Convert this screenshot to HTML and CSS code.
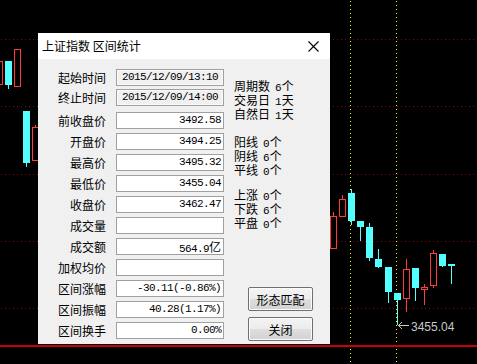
FILE: index.html
```html
<!DOCTYPE html>
<html lang="zh-CN">
<head>
    <meta charset="UTF-8">
    <title>区间统计</title>
    <link rel="stylesheet" href="styles.css">
</head>
<body>
    <div class="screen">
        <svg class="chart" width="477" height="364" viewBox="0 0 477 364">
            <g class="grid" stroke="#900000" stroke-dasharray="1 3">
                <line x1="1" y1="39.5" x2="477" y2="39.5"/>
                <line x1="1" y1="106.5" x2="477" y2="106.5"/>
                <line x1="1" y1="174.5" x2="477" y2="174.5"/>
                <line x1="1" y1="241.5" x2="477" y2="241.5"/>
                <line x1="1" y1="308.5" x2="477" y2="308.5"/>
            </g>
            <g class="cursor" stroke="#ffff00" stroke-dasharray="1 3">
                <line x1="350.5" y1="1" x2="350.5" y2="364"/>
                <line x1="396.5" y1="1" x2="396.5" y2="364"/>
            </g>
            <!-- rising candles: hollow red -->
            <g class="up" fill="#000" stroke="#ff3c3c">
                <rect x="-3.5" y="61.5" width="6" height="23"/>
                <rect x="14.5" y="49.5" width="6" height="37"/>
                <line x1="35.5" y1="125" x2="35.5" y2="127"/>
                <rect x="32.5" y="127.5" width="6" height="33"/>
                <line x1="333.5" y1="212" x2="333.5" y2="216"/>
                <rect x="330.5" y="216.5" width="6" height="32"/>
                <line x1="342.5" y1="195" x2="342.5" y2="199"/>
                <rect x="339.5" y="199.5" width="6" height="17"/>
                <line x1="406.5" y1="259" x2="406.5" y2="312"/>
                <rect x="403.5" y="269.5" width="6" height="29"/>
                <line x1="424.5" y1="284" x2="424.5" y2="305"/>
                <rect x="421.5" y="287.5" width="6" height="2"/>
                <line x1="433.5" y1="250" x2="433.5" y2="288"/>
                <rect x="430.5" y="253.5" width="6" height="32"/>
            </g>
            <!-- falling candles: solid cyan -->
            <g class="down" fill="#54ffff" stroke="#54ffff">
                <line x1="8.5" y1="61" x2="8.5" y2="89"/>
                <rect x="5" y="61" width="7" height="24" stroke="none"/>
                <line x1="26.5" y1="111" x2="26.5" y2="167"/>
                <rect x="23" y="111" width="7" height="52" stroke="none"/>
                <line x1="351.5" y1="189" x2="351.5" y2="225"/>
                <rect x="348" y="193" width="7" height="28" stroke="none"/>
                <line x1="360.5" y1="221" x2="360.5" y2="241"/>
                <rect x="357" y="221" width="7" height="6" stroke="none"/>
                <line x1="369.5" y1="223" x2="369.5" y2="261"/>
                <rect x="366" y="227" width="7" height="31" stroke="none"/>
                <line x1="378.5" y1="249" x2="378.5" y2="268"/>
                <rect x="375" y="259" width="7" height="8" stroke="none"/>
                <line x1="388.5" y1="267" x2="388.5" y2="303"/>
                <rect x="385" y="267" width="7" height="25" stroke="none"/>
                <line x1="397.5" y1="293" x2="397.5" y2="325"/>
                <rect x="394" y="293" width="7" height="7" stroke="none"/>
                <line x1="415.5" y1="268" x2="415.5" y2="301"/>
                <rect x="412" y="268" width="7" height="20" stroke="none"/>
                <line x1="442.5" y1="254" x2="442.5" y2="267"/>
                <rect x="439" y="254" width="7" height="12" stroke="none"/>
                <line x1="451.5" y1="264" x2="451.5" y2="284"/>
                <rect x="448" y="264" width="7" height="2" stroke="none"/>
            </g>
            <g class="low-mark" stroke="#c8c8c8" fill="none">
                <line x1="398" y1="325.5" x2="409" y2="325.5"/>
                <polyline points="402,322 398.5,325.5 402,329"/>
            </g>
            <text class="low-text" x="411" y="331">3455.04</text>
            <rect class="baseline" x="0" y="345" width="477" height="2" fill="#c80000"/>
        </svg>

        <div class="dialog">
            <div class="titlebar">
                <span class="title">上证指数 区间统计</span>
                <svg class="close" width="11" height="11" viewBox="0 0 11 11">
                    <path d="M0.5 0.5 L10.5 10.5 M10.5 0.5 L0.5 10.5" stroke="#000" stroke-width="1.1"/>
                </svg>
            </div>
            <div class="dialog-body">
                <div class="form">
                    <div class="group group-time">
                        <div class="row"><span class="label">起始时间</span><span class="field readonly">2015/12/09/13:10</span></div>
                        <div class="row"><span class="label">终止时间</span><span class="field readonly">2015/12/09/14:00</span></div>
                    </div>
                    <div class="group group-price">
                        <div class="row"><span class="label">前收盘价</span><span class="field">3492.58</span></div>
                        <div class="row"><span class="label">开盘价</span><span class="field">3494.25</span></div>
                        <div class="row"><span class="label">最高价</span><span class="field">3495.32</span></div>
                        <div class="row"><span class="label">最低价</span><span class="field">3455.04</span></div>
                        <div class="row"><span class="label">收盘价</span><span class="field">3462.47</span></div>
                        <div class="row"><span class="label">成交量</span><span class="field"></span></div>
                        <div class="row"><span class="label">成交额</span><span class="field">564.9<span class="cjk">亿</span></span></div>
                        <div class="row"><span class="label">加权均价</span><span class="field"></span></div>
                        <div class="row"><span class="label">区间涨幅</span><span class="field">-30.11(-0.86%)</span></div>
                        <div class="row"><span class="label">区间振幅</span><span class="field">40.28(1.17%)</span></div>
                        <div class="row"><span class="label">区间换手</span><span class="field">0.00%</span></div>
                    </div>
                </div>
                <div class="side">
                    <div class="stats stats-days">
                        <div>周期数<span class="num">6</span>个</div>
                        <div>交易日<span class="num">1</span>天</div>
                        <div>自然日<span class="num">1</span>天</div>
                    </div>
                    <div class="stats stats-lines">
                        <div>阳线<span class="num">0</span>个</div>
                        <div>阴线<span class="num">6</span>个</div>
                        <div>平线<span class="num">0</span>个</div>
                    </div>
                    <div class="stats stats-moves">
                        <div>上涨<span class="num">0</span>个</div>
                        <div>下跌<span class="num">6</span>个</div>
                        <div>平盘<span class="num">0</span>个</div>
                    </div>
                    <div class="buttons">
                        <button class="btn">形态匹配</button>
                        <button class="btn">关闭</button>
                    </div>
                </div>
            </div>
        </div>
    </div>
</body>
</html>
```

FILE: styles.css
```css
body {
    margin: 0;
    background: #000;
    font-family: "Noto Sans CJK SC", sans-serif;
    font-size: 12px;
    color: #000;
}
.screen {
    position: relative;
    width: 477px;
    height: 364px;
    overflow: hidden;
}
.chart {
    display: block;
}
.low-text {
    font-family: "Liberation Sans", sans-serif;
    font-size: 12px;
    fill: #c8c8c8;
}
.dialog {
    position: absolute;
    left: 38px;
    top: 33px;
    width: 292px;
    height: 311px;
    display: flex;
    flex-direction: column;
    background: #f0f0f0;
}
.titlebar {
    height: 26px;
    flex-shrink: 0;
    background: #fff;
    display: flex;
    align-items: center;
    justify-content: space-between;
    padding: 0 11px 0 4px;
}
.title {
    line-height: 26px;
    letter-spacing: 0;
}
.close {
    display: block;
}
.dialog-body {
    flex: 1;
    display: flex;
    padding-top: 10px;
}
.form {
    width: 186px;
}
.group {
    display: flex;
    flex-direction: column;
}
.group-time {
    gap: 3px;
    margin-bottom: 6px;
}
.group-price {
    gap: 4px;
}
.row {
    display: grid;
    grid-template-columns: 68px 108px;
    column-gap: 10px;
    align-items: center;
    height: 17px;
}
.label {
    text-align: right;
    line-height: 17px;
    white-space: nowrap;
}
.field {
    height: 17px;
    box-sizing: border-box;
    border: 1px solid #a0a0a0;
    background: #fff;
    font-family: "Liberation Mono", "Noto Sans CJK SC", monospace;
    font-size: 11px;
    letter-spacing: -0.6px;
    line-height: 15px;
    text-align: right;
    padding-right: 2px;
    white-space: nowrap;
}
.field.readonly {
    background: #f0f0f0;
    text-align: center;
    padding-right: 0;
    box-shadow: inset 0 0 0 1px #fafafa;
}
.cjk {
    font-family: "Noto Sans CJK SC", sans-serif;
    font-size: 12px;
    letter-spacing: 0;
}
.side {
    flex: 1;
    display: flex;
    flex-direction: column;
    padding: 11px 0 3px 10px;
}
.stats {
    line-height: 12px;
    white-space: nowrap;
}
.stats-lines {
    margin-top: 14px;
}
.stats-moves {
    margin-top: 11px;
}
.num {
    font-family: "Liberation Mono", monospace;
    font-size: 11px;
    margin-left: 5px;
}
.buttons {
    margin-top: auto;
    display: flex;
    flex-direction: column;
    gap: 6px;
    padding-left: 14px;
}
.btn {
    width: 65px;
    height: 24px;
    padding: 0;
    border: 1px solid #707070;
    border-radius: 2px;
    background: linear-gradient(#f4f4f4, #ececec 50%, #dedede 50%, #d2d2d2);
    box-shadow: inset 0 0 0 1px #fbfbfb;
    font-family: "Noto Sans CJK SC", sans-serif;
    font-size: 12px;
    color: #000;
}
```
